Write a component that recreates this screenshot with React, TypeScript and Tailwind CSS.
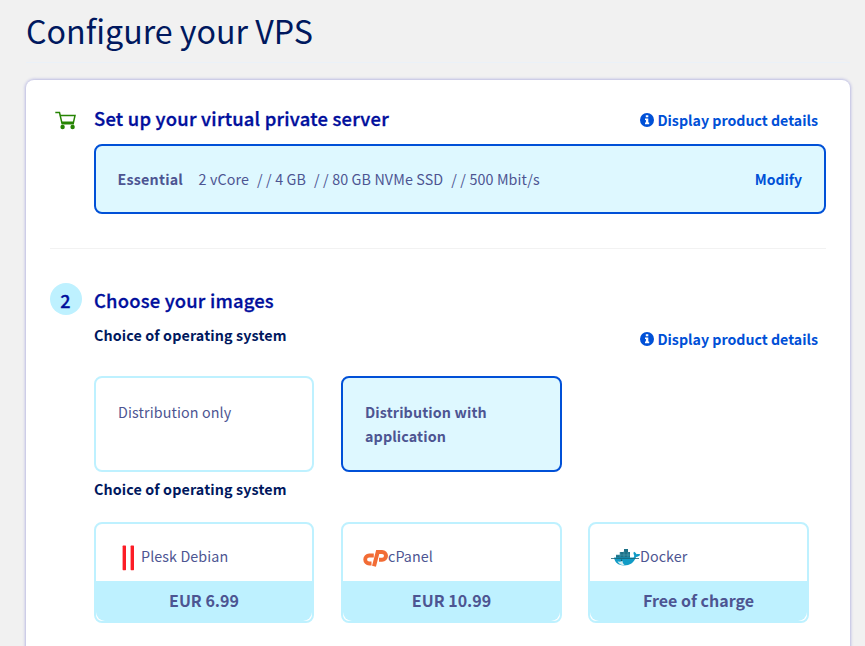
import type { ReactNode } from 'react';

function CartIcon() {
  return (
    <svg className="mt-[7px] ml-[5px] h-[20px] w-[22px]" viewBox="0 0 22 20" fill="none">
      <path d="M.3 1.500h4.200l2.600 11.300h11.900" stroke="#268403" strokeWidth="1.500" />
      <path d="M4.900 4.600h15.100l-1.500 6.600h-11.800" stroke="#268403" strokeWidth="1.500" />
      <circle cx="7.600" cy="16" r="2.200" fill="#268403" />
      <circle cx="17.600" cy="16" r="2.200" fill="#268403" />
    </svg>
  );
}

function DetailsLink() {
  return (
    <a className="flex h-[24px] items-center gap-[3px] text-[14.2px] leading-[24px] font-bold whitespace-nowrap text-[#0050d7]">
      <svg className="h-[14px] w-[14px]" viewBox="0 0 14 14">
        <circle cx="7" cy="7" r="7" fill="#0050d7" />
        <path d="M5.8 2.2h2.5v2H5.8zM5 5.4h3.3v4.1h.9v1.7H5V9.5h.9V7H5z" fill="#fff" />
      </svg>
      <span>Display product details</span>
    </a>
  );
}

function PleskLogo() {
  return (
    <svg className="mt-[3px] mr-[5px] ml-[4px] h-[26px] w-[14px]" viewBox="0 0 14 26">
      <rect x="0.600" y="0.600" width="3.400" height="24.600" rx="0.600" fill="#fc1d26" />
      <rect x="8.600" y="0.600" width="3.400" height="24.600" rx="0.600" fill="#fc1d26" />
    </svg>
  );
}

function CpanelLogo() {
  return (
    <svg className="mt-[3px] -ml-[2px] h-[18px] w-[25px]" viewBox="0 0 25 18" fill="none">
      <path d="M10.800 6.500H6.200a4 4 0 0 0 0 8h2.300" stroke="#f26c35" strokeWidth="3.800" />
      <path d="M11 17.300 14.700 2.900h4.400a3.900 3.900 0 0 1 0 7.800H16" stroke="#f26c35" strokeWidth="4" />
    </svg>
  );
}

function DockerLogo() {
  return (
    <svg className="mt-px -ml-px h-[18px] w-[29px]" viewBox="0 0 29 18">
      <path d="M5 7h4V4h4V1h4v3h2v6H5z" fill="#1d7187" />
      <path d="M9 4v5M13 3v6M17 4v5M5 7h14" stroke="#52a3b5" strokeWidth="0.6" />
      <path d="M3 9.6h19.5c.8-1.200.9-1.600.5-2.600-.6-1-.8-2 0-3.300 1.500.7 2.200 1.500 2.400 2.500 1.400-.5 2.700-.3 3.900.3-.8 1.600-2.200 2.300-4.200 2.400C22.800 14.600 19 17.400 13 17.400 7 17.400 3.800 14.600 3 9.600z" fill="#109bc6" />
      <path d="M6.500 13.500c2.300.4 3.500 0 5-.6.2 2 .9 3.400 2.500 4.400-3.600.2-6-1.200-7.500-3.800z" fill="#d5edf2" />
      <path d="M0 10.500h28" stroke="#1c6173" strokeWidth="0.800" />
      <circle cx="10.500" cy="12.300" r="0.700" fill="#1c4654" />
    </svg>
  );
}

function ProductCard({ logo, name, price }: { logo: ReactNode; name: string; price: string }) {
  return (
    <div className="flex h-[101px] flex-col rounded-[8px] border-2 border-[#bef1ff] bg-white first:w-[220px]">
      <div className="flex h-[57px] items-center pt-[8px] pl-[22px] text-[14.3px] leading-[24px] tracking-[0.1px]">
        {logo}
        <span className="-mt-[2px]">{name}</span>
      </div>
      <div className="h-[40px] rounded-b-[9px] bg-[#bef1ff] text-center text-[16px] leading-[38px] font-bold">
        {price}
      </div>
    </div>
  );
}

export default function App() {
  return (
    <div className="h-[646px] w-[865px] overflow-hidden bg-[#f1f1f1] pl-[26px] font-['Noto_Sans_CJK_SC','Source_Sans_Pro',sans-serif] text-[#4d5592]">
      <h1 className="h-[63px] w-[824px] border-b border-[#eaf1f8] text-[32.2px] leading-[61px] font-normal text-[#00185e]">
        Configure your VPS
      </h1>
      <main className="mt-[17px] h-[600px] w-[824px] rounded-[8px] bg-white pt-[24px] pr-[24px] pl-[24px] shadow-[0_0_3px_1px_#babae2]">
        <section className="flex h-[144px]">
          <div className="w-[44px] shrink-0">
            <CartIcon />
          </div>
          <div className="w-[732px]">
            <div className="flex h-[40px] justify-between pr-[8px]">
              <h2 className="text-[18.4px] leading-[28px] font-medium tracking-[0.24px] text-[#000e9c] [-webkit-text-stroke:0.35px]">
                Set up your virtual private server
              </h2>
              <div className="mt-[4px]">
                <DetailsLink />
              </div>
            </div>
            <div className="flex h-[70px] items-center rounded-[8px] border-2 border-[#0050d7] bg-[#def8ff] px-[22px] text-[14.3px] leading-[24px] tracking-[0.12px]">
              <b className="-ml-[0.5px] mr-[15.5px] font-bold tracking-[0.2px]">Essential</b>
              <span className="mr-[8px]">2 vCore</span>
              <span className="mr-[8px]">/ / 4 GB</span>
              <span className="mr-[8px]">/ / 80 GB NVMe SSD</span>
              <span>/ / 500 Mbit/s</span>
              <a className="ml-auto text-[14px] font-bold tracking-normal text-[#0050d7]">Modify</a>
            </div>
          </div>
        </section>
        <hr className="border-[#f2f2f2]" />
        <section className="flex pt-[34px]">
          <div className="w-[44px] shrink-0">
            <div className="h-[32px] w-[32px] rounded-full bg-[#bef1ff] pr-[1px] text-center text-[18px] leading-[34px] font-medium text-[#000e9c] [-webkit-text-stroke:0.3px]">
              2
            </div>
          </div>
          <div className="w-[732px]">
            <div className="flex h-[93px] justify-between pr-[8px]">
              <div>
                <h2 className="text-[18.4px] leading-[34px] font-medium tracking-[0.2px] text-[#000e9c] [-webkit-text-stroke:0.3px]">
                  Choose your images
                </h2>
                <h3 className="mt-[6px] text-[14.3px] leading-[24px] font-bold tracking-[0.12px] text-[#00185e]">
                  Choice of operating system
                </h3>
              </div>
              <div className="mt-[44px]">
                <DetailsLink />
              </div>
            </div>
            <div className="grid grid-cols-[221px_221px_221px] gap-x-[26px] text-[14.3px] leading-[24px] tracking-[0.12px]">
              <div className="h-[96px] w-[220px] rounded-[8px] border-2 border-[#bef1ff] px-[22px] pt-[22px]">
                Distribution only
              </div>
              <div className="h-[96px] rounded-[8px] border-2 border-[#0050d7] bg-[#def8ff] px-[22px] pt-[22px] font-bold">
                Distribution with
                <br />
                application
              </div>
            </div>
            <h3 className="mt-[5px] mb-[21px] text-[14.3px] leading-[24px] font-bold tracking-[0.12px] text-[#00185e]">
              Choice of operating system
            </h3>
            <div className="grid grid-cols-[221px_221px_221px] gap-x-[26px]">
              <ProductCard logo={<PleskLogo />} name="Plesk Debian" price="EUR 6.99" />
              <ProductCard logo={<CpanelLogo />} name="cPanel" price="EUR 10.99" />
              <ProductCard logo={<DockerLogo />} name="Docker" price="Free of charge" />
            </div>
          </div>
        </section>
      </main>
    </div>
  );
}
